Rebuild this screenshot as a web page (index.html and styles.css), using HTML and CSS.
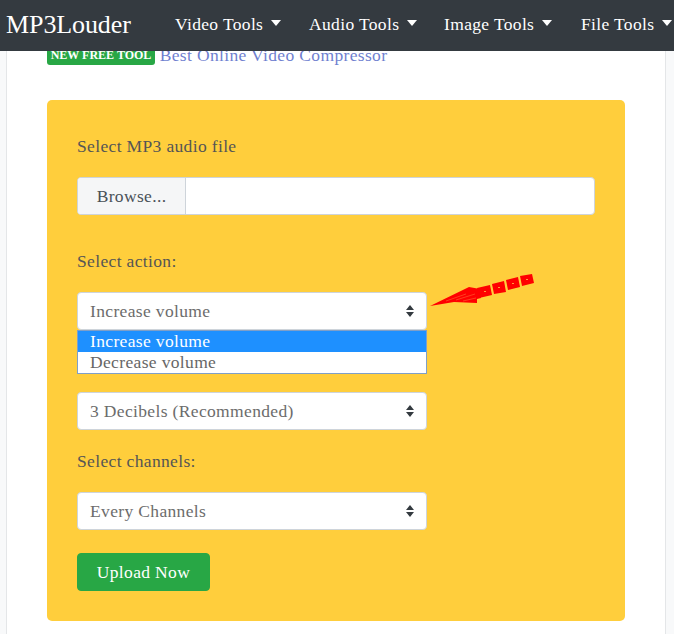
FILE: index.html
```html
<!DOCTYPE html>
<html lang="en">
<head>
    <meta charset="UTF-8">
    <meta name="viewport" content="width=device-width, initial-scale=1.0">
    <title>MP3Louder</title>
    <link rel="stylesheet" href="styles.css">
</head>
<body>
    <nav class="navbar">
        <a class="brand" href="#">MP3Louder</a>
        <ul class="nav-links">
            <li class="nav-video"><a href="#">Video Tools</a><span class="caret"></span></li>
            <li class="nav-audio"><a href="#">Audio Tools</a><span class="caret"></span></li>
            <li class="nav-image"><a href="#">Image Tools</a><span class="caret"></span></li>
            <li class="nav-file"><a href="#">File Tools</a><span class="caret"></span></li>
        </ul>
    </nav>

    <main class="page-card">
        <p class="promo"><span class="badge">NEW FREE TOOL</span> <a href="#">Best Online Video Compressor</a></p>

        <form class="tool-box">
            <label class="field-label">Select MP3 audio file</label>
            <div class="file-input">
                <span class="browse">Browse...</span>
            </div>

            <label class="field-label action-label">Select action:</label>
            <div class="select-wrap">
                <div class="select">
                    <span>Increase volume</span>
                    <svg class="updown" width="10" height="14" viewBox="0 0 10 14"><path d="M5 1 9 6H1zM5 13 1 8h8z"/></svg>
                </div>
                <ul class="select-menu">
                    <li class="selected">Increase volume</li>
                    <li>Decrease volume</li>
                </ul>
                <svg class="red-arrow" width="110" height="40" viewBox="0 0 110 40">
                    <path d="M0 32 39 13 50 15 51 24 47 25 47 29 24 28Z"/>
                    <path d="M47 14 60 11 62 21 49 24Z"/>
                    <path d="M62 10 74 7 76 18 64 20Z"/>
                    <path d="M76 6 88 3 90 13 78 16Z"/>
                    <path d="M90 2 102 0 104 9 92 12Z"/>
                    <path d="M16 27 36 20M26 26 45 20M33 27 46 24" class="scribble"/>
                    <path d="M54 17h2v1h-2zM68 13h2v1h-2zM82 9h2v1h-2zM96 5h2v1h-2z" class="holes"/>
                </svg>
            </div>

            <label class="field-label"></label>
            <div class="select">
                <span>3 Decibels (Recommended)</span>
                <svg class="updown" width="10" height="14" viewBox="0 0 10 14"><path d="M5 1 9 6H1zM5 13 1 8h8z"/></svg>
            </div>

            <label class="field-label">Select channels:</label>
            <div class="select">
                <span>Every Channels</span>
                <svg class="updown" width="10" height="14" viewBox="0 0 10 14"><path d="M5 1 9 6H1zM5 13 1 8h8z"/></svg>
            </div>

            <button class="upload-btn" type="button">Upload Now</button>
        </form>
    </main>
</body>
</html>
```

FILE: styles.css
```css
* {
    box-sizing: border-box;
}

html, body {
    height: 634px;
    overflow: hidden;
}

body {
    margin: 0;
    padding: 0 8px 0 6px;
    background-color: #f8f9fa;
    font-family: 'Liberation Serif', serif;
    font-size: 17.5px;
    letter-spacing: 0.35px;
    color: #555;
}

a {
    text-decoration: none;
}

.navbar {
    position: fixed;
    top: 0;
    left: 0;
    right: 0;
    height: 51px;
    z-index: 10;
    display: flex;
    align-items: center;
    padding: 0 0 2px 6px;
    background-color: #343a40;
    white-space: nowrap;
}

.brand {
    width: 169px;
    font-size: 26px;
    letter-spacing: -0.1px;
    color: #fff;
}

.nav-links {
    display: flex;
    margin: 0;
    padding: 0;
    list-style: none;
}

.nav-links li {
    display: flex;
    align-items: center;
}

.nav-links a {
    color: #fff;
}

.nav-video { width: 134px; }
.nav-audio { width: 135px; }
.nav-image { width: 137px; }

.caret {
    margin: 0 0 3px 8px;
    border-top: 6px solid #fff;
    border-left: 5px solid transparent;
    border-right: 5px solid transparent;
}

.page-card {
    height: 634px;
    padding: 44px 40px 0;
    background-color: #fff;
    border-left: 1px solid #e4e6e8;
    border-right: 1px solid #e4e6e8;
}

.promo {
    margin: 0 0 34px;
    height: 22px;
    line-height: 22px;
    white-space: nowrap;
}

.promo a {
    color: #6f7fd0;
}

.badge {
    display: inline-block;
    width: 108px;
    height: 21px;
    border-radius: 3px;
    background-color: #28a745;
    color: #fff;
    font-size: 12px;
    font-weight: bold;
    letter-spacing: 0;
    text-align: center;
    vertical-align: top;
}

.tool-box {
    height: 521px;
    padding: 34px 30px 0;
    border-radius: 5px;
    background-color: #ffce3c;
}

.field-label {
    display: block;
    height: 24px;
    line-height: 24px;
    margin-bottom: 19px;
}

.action-label {
    margin-top: 34px;
}

.file-input {
    display: flex;
    height: 38px;
    background-color: #fff;
    border: 1px solid #ced4da;
    border-radius: 4px;
    overflow: hidden;
}

.browse {
    width: 108px;
    line-height: 36px;
    text-align: center;
    background-color: #f5f6f7;
    border-right: 1px solid #ced4da;
    color: #495057;
}

.select-wrap {
    position: relative;
}

.select {
    display: flex;
    align-items: center;
    justify-content: space-between;
    width: 350px;
    height: 38px;
    margin-bottom: 19px;
    padding: 0 11px 0 12px;
    background-color: #fff;
    border: 1px solid #ced4da;
    border-radius: 4px;
    color: #6c6c6c;
}

.updown {
    fill: #343a40;
}

/* open dropdown hangs over the next label */
.select-menu {
    position: absolute;
    top: 38px;
    left: 0;
    width: 350px;
    margin: 0;
    padding: 0;
    list-style: none;
    background-color: #fff;
    border: 1px solid #7f9fc8;
    z-index: 2;
}

.select-menu li {
    height: 21px;
    line-height: 21px;
    padding-left: 12px;
    color: #666;
}

.select-menu .selected {
    background-color: #1e90ff;
    color: #fff;
}

.red-arrow {
    position: absolute;
    top: -18px;
    left: 353px;
    fill: #f00;
}

.scribble {
    fill: none;
    stroke: #ff7a3c;
    stroke-width: 0.5;
}

.holes {
    fill: #ff9a3c;
}

.upload-btn {
    display: block;
    width: 133px;
    height: 38px;
    margin-top: 23px;
    padding: 0;
    border: 1px solid #28a745;
    border-radius: 4px;
    background-color: #28a745;
    color: #fff;
    font-family: inherit;
    font-size: inherit;
    letter-spacing: inherit;
}
```
